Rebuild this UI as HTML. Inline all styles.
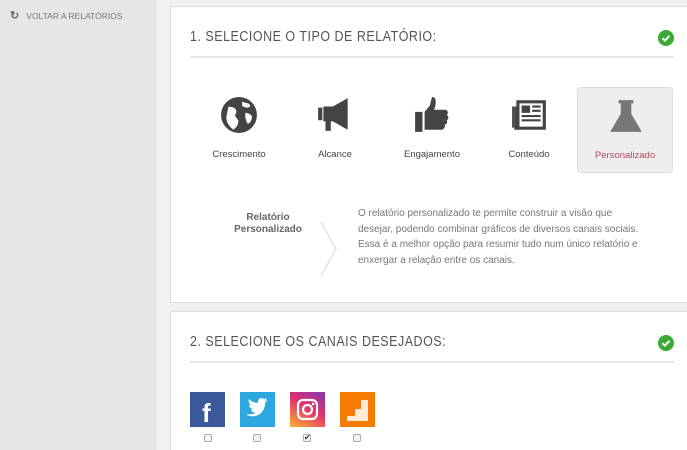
<!DOCTYPE html>
<html><head><meta charset="utf-8"><style>
*{margin:0;padding:0;box-sizing:border-box}
html,body{width:687px;height:450px;overflow:hidden}
body{background:#f1f1f1;font-family:"Liberation Sans",sans-serif;position:relative}
.side{position:absolute;left:0;top:0;width:157px;height:450px;background:#e6e6e6}
.back{position:absolute;left:10px;top:9px;font-size:8.5px;color:#777}
.panel{position:absolute;left:170px;width:530px;background:#fff;border:1px solid #ddd}
.title{position:absolute;left:19px;font-size:14.5px;color:#555;letter-spacing:.6px;transform:scaleX(.86);transform-origin:left;white-space:nowrap}
.line{position:absolute;left:19px;width:484px;height:2px;background:#e6e6e6}
.chk{position:absolute;left:487px;width:16px;height:16px;border-radius:50%;background:#3aaa35}
.opt{position:absolute;top:80px;width:96px;height:86px;text-align:center;font-size:9.5px;color:#444}
.opt svg{position:absolute;left:29px;top:9px}
.opt span{position:absolute;left:0;right:0;top:62px}
.soc{position:absolute;top:80px;width:35px;height:35px}
.cb{position:absolute;top:122px;width:8px;height:8px;border:1px solid #aaa;border-radius:2px;background:#f4f4f4}
</style></head><body>
<div class="side"><div class="back"><span style="font-weight:bold;font-size:11px;color:#666;margin-right:7px">↻</span>VOLTAR A RELATÓRIOS</div></div>

<div class="panel" style="top:6px;height:297px">
 <div class="title" style="top:22px">1. SELECIONE O TIPO DE RELATÓRIO:</div>
 <div class="chk" style="top:23px"><svg width="16" height="16"><path d="M4.5 8.2l2.4 2.4 4.6-4.8" stroke="#fff" stroke-width="2" fill="none"/></svg></div>
 <div class="line" style="top:49px"></div>
 <div class="opt" style="left:20px"><svg width="38" height="38" viewBox="0 0 36 36"><circle cx="18" cy="18" r="17" fill="#444"/><path d="M8 10c3 1 5 0 7 3s-2 4 0 7 3 2 2 6-3 4-4 6c-3-2-7-6-7-12zM21 5c2 2 5 1 7 3s-1 3-3 3-3-2-4-1zM24 16c2 0 5 1 6 3s-1 6-3 7-2-4-3-5z" fill="#fff"/></svg><span>Crescimento</span></div>
 <div class="opt" style="left:116px"><svg width="38" height="38" viewBox="0 0 36 36"><path d="M2 11h4v12H2zM7 10h9l14-8v30L16 24H7zM9 24h5v9H9z" fill="#444"/></svg><span>Alcance</span></div>
 <div class="opt" style="left:213px"><svg width="38" height="38" viewBox="0 0 36 36"><path d="M2 15h7v19H2zM11 15l5-6 2-8c4 0 4 4 3 9l-1 3h10c3 0 4 3 2 5 2 1 2 4 0 5 1 2 0 4-2 4 1 2-1 5-3 5H11z" fill="#444"/></svg><span>Engajamento</span></div>
 <div class="opt" style="left:310px"><svg width="38" height="38" viewBox="0 0 36 36"><path d="M6 4h28v28H4V10h2z" fill="#444"/><path d="M9 7h22v22H9z" fill="#fff"/><path d="M11 9h8v7h-8zM21 9h8v2h-8zM21 13h8v2h-8zM11 18h18v2H11zM11 22h18v2H11zM2 10h2v20H2z" fill="#444"/></svg><span>Conteúdo</span></div>
 <div class="opt" style="left:406px;background:#eee;border:1px solid #ddd;border-radius:4px;color:#b8475b"><svg width="38" height="38" viewBox="0 0 36 36"><path d="M11 3h14v3h-2v10l10 17H3L13 16V6h-2z" fill="#777"/></svg><span>Personalizado</span></div>
 <div style="position:absolute;left:47px;top:205px;width:100px;text-align:center;font-size:10px;font-weight:bold;color:#666;line-height:12px">Relatório<br>Personalizado</div>
 <svg style="position:absolute;left:148px;top:214px" width="20" height="56"><path d="M2 1l15 27L2 55" stroke="#e2e2e2" stroke-width="1.5" fill="none"/></svg>
 <div style="position:absolute;left:187px;top:199px;width:320px;font-size:10px;color:#777;line-height:15.7px;white-space:nowrap">O relatório personalizado te permite construir a visão que<br>desejar, podendo combinar gráficos de diversos canais sociais.<br>Essa é a melhor opção para resumir tudo num único relatório e<br>enxergar a relação entre os canais.</div>
</div>

<div class="panel" style="top:311px;height:145px">
 <div class="title" style="top:22px">2. SELECIONE OS CANAIS DESEJADOS:</div>
 <div class="chk" style="top:23px"><svg width="16" height="16"><path d="M4.5 8.2l2.4 2.4 4.6-4.8" stroke="#fff" stroke-width="2" fill="none"/></svg></div>
 <div class="line" style="top:49px"></div>
 <div class="soc" style="left:19px;background:#3b5998"><svg width="35" height="35"><text x="12" y="30" font-family="Liberation Sans" font-weight="bold" font-size="26" fill="#fff">f</text></svg></div>
 <div class="soc" style="left:69px;background:#2ca7e0"><svg width="35" height="35" viewBox="0 0 35 35"><path d="M7 23c4 2 10 2 14-2s4-8 4-10l3-3-3 1 2-3-3 1c-2-2-6-1-6 3v1c-4 0-7-2-9-4-1 2 0 5 2 6l-2 0c0 2 2 4 4 4l-2 1c1 2 3 2 4 3-2 1-5 2-8 1z" fill="#fff"/></svg></div>
 <div class="soc" style="left:119px;background:linear-gradient(30deg,#f9b233,#e1306c 55%,#833ab4)"><svg width="35" height="35"><rect x="8" y="8" width="19" height="19" rx="5" stroke="#fff" stroke-width="2.2" fill="none"/><circle cx="17.5" cy="17.5" r="4.5" stroke="#fff" stroke-width="2.2" fill="none"/><circle cx="23" cy="12" r="1.3" fill="#fff"/></svg></div>
 <div class="soc" style="left:169px;background:#f57c00"><svg width="35" height="35"><path d="M7 24h8v5H7zM15 17h6v12h-6zM21 8h7v21h-7z" fill="#fff" opacity=".85"/></svg></div>
 <div class="cb" style="left:33px"></div>
 <div class="cb" style="left:82px"></div>
 <div class="cb" style="left:132px;font-size:8px;line-height:6px;color:#333">✔</div>
 <div class="cb" style="left:182px"></div>
</div>
</body></html>
